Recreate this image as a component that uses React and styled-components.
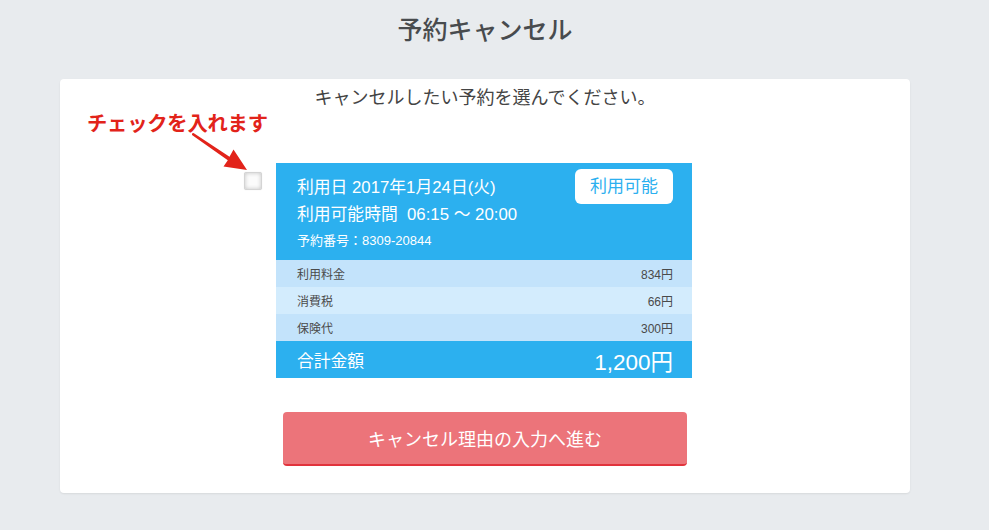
import React from 'react';
import styled, { createGlobalStyle } from 'styled-components';

const Global = createGlobalStyle`
  html, body { margin: 0; padding: 0; background: #e8ebee; }
  body { font-family: "Liberation Sans", "Noto Sans CJK JP", sans-serif; color: #444; }
`;

const Page = styled.div`
  width: 970px;
  height: 530px;
  padding-right: 19px;
  display: flex;
  flex-direction: column;
  align-items: center;
`;

const Title = styled.h1`
  margin: 13px 0 0;
  height: 35px;
  line-height: 35px;
  font-size: 25px;
  font-weight: 500;
  color: #484b4e;
`;

const Panel = styled.div`
  position: relative;
  margin-top: 31px;
  width: 850px;
  height: 414px;
  background: #fff;
  border-radius: 4px;
  box-shadow: 0 1px 2px rgba(0, 0, 0, 0.08);
  display: flex;
  flex-direction: column;
  align-items: center;
`;

const Lead = styled.p`
  margin: 7px 0 0;
  line-height: 24px;
  font-size: 18px;
  color: #444;
`;

const Note = styled.div`
  position: absolute;
  left: 27px;
  top: 28px;
  font-size: 20.3px;
  font-weight: 700;
  color: #e2231a;
  letter-spacing: -0.2px;
`;

const Arrow = styled.svg`
  position: absolute;
  left: 129px;
  top: 51px;
`;

const Row3 = styled.div`
  margin-top: 53px;
  width: 100%;
  display: grid;
  grid-template-columns: 216px 416px 1fr;
`;

const Check = styled.div`
  justify-self: end;
  margin: 9px 14px 0 0;
  width: 16px;
  height: 16px;
  border: 1px solid #d4d4d4;
  border-radius: 2px;
  background: #fbfbfb;
  box-shadow: inset 0 0 4px rgba(0, 0, 0, 0.22), 0 0 1px rgba(0, 0, 0, 0.15);
`;

const Ticket = styled.div`
  width: 416px;
`;

const Head = styled.div`
  background: #2cb0ef;
  color: #fff;
  padding: 11px 19px 0 21px;
  height: 86px;
  display: flex;
  justify-content: space-between;
  align-items: flex-start;
`;

const Info = styled.div`
  display: flex;
  flex-direction: column;
`;

const Line = styled.div`
  font-size: ${p => (p.small ? '13px' : '16.8px')};
  line-height: ${p => (p.small ? '26px' : '27px')};
  white-space: pre;
`;

const Badge = styled.div`
  margin-top: -5px;
  background: #fff;
  color: #2cb0ef;
  border-radius: 6px;
  padding: 0 15px;
  height: 35px;
  line-height: 35px;
  font-size: 17px;
`;

const FeeRow = styled.div`
  height: 27px;
  padding: 0 19px 0 21px;
  display: flex;
  justify-content: space-between;
  align-items: center;
  font-size: 12px;
  color: #4a4a4a;
  background: ${p => (p.alt ? '#d3ecfd' : '#c3e3fb')};
`;

const Total = styled.div`
  height: 37px;
  padding: 0 19px 0 21px;
  display: flex;
  justify-content: space-between;
  align-items: center;
  background: #2cb0ef;
  color: #fff;
`;

const TotalLabel = styled.span`
  font-size: 16.8px;
`;

const TotalValue = styled.span`
  font-size: 22.5px;
`;

const Button = styled.button`
  margin-top: 34px;
  width: 404px;
  height: 54px;
  border: none;
  border-bottom: 2px solid #e1333c;
  border-radius: 4px;
  background: #ec747a;
  color: #fff;
  font-family: inherit;
  font-size: 18px;
  cursor: pointer;
`;

const fees = [
  { label: '利用料金', value: '834円' },
  { label: '消費税', value: '66円' },
  { label: '保険代', value: '300円' },
];

export default function App() {
  return (
    <Page>
      <Global />
      <Title>予約キャンセル</Title>
      <Panel>
        <Lead>キャンセルしたい予約を選んでください。</Lead>
        <Note>チェックを入れます</Note>
        <Arrow width="62" height="45" viewBox="0 0 62 45">
          <polygon
            points="3,3.5 4.5,3 40.5,26.8 44.5,19.5 58,40 34.5,36.5 38.8,30.2 3,5"
            fill="#e2231a"
          />
        </Arrow>
        <Row3>
          <Check />
          <Ticket>
            <Head>
              <Info>
                <Line>利用日 2017年1月24日(火)</Line>
                <Line>利用可能時間  06:15 〜 20:00</Line>
                <Line small>予約番号：8309-20844</Line>
              </Info>
              <Badge>利用可能</Badge>
            </Head>
            {fees.map((f, i) => (
              <FeeRow key={f.label} alt={i % 2 === 1}>
                <span>{f.label}</span>
                <span>{f.value}</span>
              </FeeRow>
            ))}
            <Total>
              <TotalLabel>合計金額</TotalLabel>
              <TotalValue>1,200円</TotalValue>
            </Total>
          </Ticket>
          <div />
        </Row3>
        <Button>キャンセル理由の入力へ進む</Button>
      </Panel>
    </Page>
  );
}
